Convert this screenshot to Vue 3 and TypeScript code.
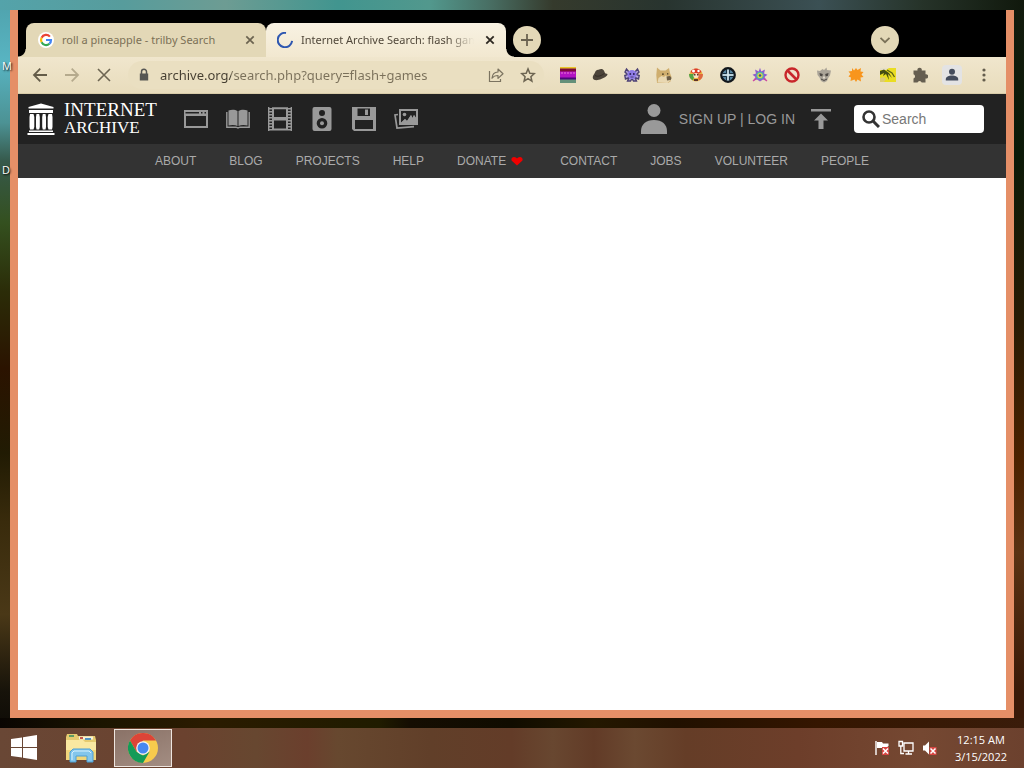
<script setup lang="ts">
import { ref } from 'vue'

interface NavItem {
  label: string
  heart?: boolean
}

const address = ref('archive.org/search.php?query=flash+games')
const query = ref('')

const navItems: NavItem[] = [
  { label: 'ABOUT' },
  { label: 'BLOG' },
  { label: 'PROJECTS' },
  { label: 'HELP' },
  { label: 'DONATE', heart: true },
  { label: 'CONTACT' },
  { label: 'JOBS' },
  { label: 'VOLUNTEER' },
  { label: 'PEOPLE' },
]
</script>

<template>
  <div class="desktop">
    <span class="desk-label first">M</span>
    <span class="desk-label second">D</span>

    <div class="stage">
      <section class="window">
        <div class="tab-strip">
          <div class="tab idle">
            <svg class="i16" viewBox="0 0 16 16">
              <circle cx="8" cy="8" r="8" fill="#fff" />
              <g fill="none" stroke-width="2.2">
                <path d="M11.9 4.6A5 5 0 0 0 3.6 5.7" stroke="#ea4335" />
                <path d="M3.6 5.7a5 5 0 0 0 0 4.6" stroke="#fbbc05" />
                <path d="M3.6 10.3a5 5 0 0 0 7.8 1.5" stroke="#34a853" />
                <path d="M11.4 11.8A5 5 0 0 0 13 8H8" stroke="#4285f4" />
              </g>
            </svg>
            <span class="tab-title">roll a pineapple - trilby Search</span>
            <button class="tab-close" aria-label="Close tab">
              <svg viewBox="0 0 16 16"><path d="M4.3 4.3l7.4 7.4m0-7.4l-7.4 7.4" fill="none" stroke="#6b6350" stroke-width="1.7" /></svg>
            </button>
          </div>
          <div class="tab active">
            <svg class="i16" viewBox="0 0 16 16"><path d="M9 .9A7.2 7.2 0 1 0 15.1 8.8" fill="none" stroke="#2d56b0" stroke-width="2" /></svg>
            <span class="tab-title fade">Internet Archive Search: flash games</span>
            <button class="tab-close" aria-label="Close tab">
              <svg viewBox="0 0 16 16"><path d="M4.3 4.3l7.4 7.4m0-7.4l-7.4 7.4" fill="none" stroke="#2c2720" stroke-width="1.8" /></svg>
            </button>
          </div>
          <button class="round" aria-label="New tab">
            <svg viewBox="0 0 28 28"><path d="M14 8v12M8 14h12" fill="none" stroke="#6a6250" stroke-width="1.8" /></svg>
          </button>
          <button class="round list" aria-label="Search tabs">
            <svg viewBox="0 0 28 28"><path d="M9.5 11.8l4.5 4.4 4.5-4.4" fill="none" stroke="#7a7158" stroke-width="1.8" /></svg>
          </button>
        </div>

        <div class="toolbar">
          <button class="tool" aria-label="Back">
            <svg viewBox="0 0 16 16"><path d="M15 8H2M8.3 1.7L2 8l6.3 6.3" fill="none" stroke="#645c49" stroke-width="1.8" /></svg>
          </button>
          <button class="tool" aria-label="Forward">
            <svg viewBox="0 0 16 16"><path d="M1 8h13M7.7 1.7L14 8l-6.3 6.3" fill="none" stroke="#b5aa8d" stroke-width="1.8" /></svg>
          </button>
          <button class="tool" aria-label="Stop loading">
            <svg viewBox="0 0 16 16"><path d="M2 2l12 12M14 2L2 14" fill="none" stroke="#6d6552" stroke-width="1.6" /></svg>
          </button>
          <form class="omnibox" @submit.prevent>
            <svg class="i16" viewBox="0 0 16 16"><path d="M3.8 6.5h8.4v7H3.8z" fill="#565653" /><path d="M5.5 7V4.8a2.5 2.5 0 0 1 5 0V7" fill="none" stroke="#565653" stroke-width="1.5" /></svg>
            <input v-model="address" class="address" type="text" aria-label="Address" />
            <button class="tool" type="button" aria-label="Share">
              <svg viewBox="0 0 16 16"><path d="M1.500 4v10.500h11V12" fill="none" stroke="#7b7360" stroke-width="1.2" /><path d="M4 11.200c.3-4 2.300-6 6-6.200V2l5 4.700-5 4.700V8.500C7.500 8.500 5.500 9.200 4 11.200z" fill="none" stroke="#7b7360" stroke-width="1.2" stroke-linejoin="round" /></svg>
            </button>
            <button class="tool" type="button" aria-label="Bookmark this page">
              <svg viewBox="0 0 16 16"><path d="M8 1.900l1.800 4.300 4.500.4-3.400 3.100 1 4.400L8 11.700l-3.900 2.400 1-4.400-3.400-3.100 4.500-.4z" fill="none" stroke="#6d6552" stroke-width="1.5" /></svg>
            </button>
          </form>

          <button class="tool" aria-label="Striped banner extension">
            <svg viewBox="0 0 16 16"><path fill="#e9c528" d="M0 0h16v3H0z" /><path fill="#7d0a3c" d="M0 1.500h16V5H0z" /><path fill="#b213c2" d="M0 4.500h16V12H0z" /><path d="M1 6h14" stroke="#ed79d6" stroke-dasharray="2 1" /><path fill="#4c0878" d="M0 10.500h16V13H0z" /><path fill="#65917a" d="M0 12.500h16V16H0z" /></svg>
          </button>
          <button class="tool" aria-label="Hat extension">
            <svg viewBox="0 0 16 16"><path d="M.8 11C.5 8.500 2.300 7.500 3 5.500 3.700 3.200 5 2.500 6.500 2.700 8 2.300 9 1.500 10.500 2.200c1.500.8 2 2.600 2.500 4L15.500 7c-.2 2.500-3.400 3.600-6.300 5C6 13.500 1.500 14 .8 11z" fill="#4c443a" /><path d="M3 8.500c3 1.800 7 0 9.500-2.300" fill="none" stroke="#332d26" /></svg>
          </button>
          <button class="tool" aria-label="Octopus extension">
            <svg viewBox="0 0 16 16"><path d="M5 5L2.500 2 1 5l2.500 2.500L.8 8.500 1.500 12 5 10.500 3.500 14h3L8 11.500 9.500 14h3L11 10.500l3.500 1.500.7-3.500-2.700-1L15 5l-1.500-3L11 5" fill="#b5a6dd" stroke="#4d4274" stroke-width="1.4" /><circle cx="8" cy="7.500" r="4.500" fill="#8e7be6" /><path d="M5.500 6h1.600v2H5.500zM9 6h1.600v2H9z" fill="#352a68" /><path d="M6.500 10h3" stroke="#4d4274" /></svg>
          </button>
          <button class="tool" aria-label="Dog extension">
            <svg viewBox="0 0 16 16"><path d="M1 .5L4.500 3.500h5L13 1l1 5 1.500 4-1 4.500L12 16H1L.3 8z" fill="#cfae6e" /><path d="M1.500 15.500L2.500 11l3-2 2.500 1 1.500-1.500 4.500 2 .5 3-3 2.500z" fill="#e9d8b2" /><path d="M10.500 9.500l3.500-.5 1.500 2-.8 2-3.700.5z" fill="#6b5c45" /><path d="M6 6.500h1.800v1.200H6zM11 6.300h1.300v1.200H11z" fill="#453822" /></svg>
          </button>
          <button class="tool" aria-label="Mushroom wheel extension">
            <svg viewBox="0 0 16 16"><circle cx="8" cy="8" r="6.500" fill="#e9b440" /><path d="M2.500 5a6 6 0 0 1 11 0L8 8z" fill="#dc3c2b" /><path d="M1 7h6l-2 6.500A7 7 0 0 1 1 7z" fill="#53a244" /><path d="M15 7H9l2 6.500A7 7 0 0 0 15 7z" fill="#df6940" /><circle cx="5.500" cy="4" r="1.500" fill="#fff" /><circle cx="10.500" cy="4" r="1.200" fill="#fff" /><circle cx="8" cy="8.500" r="2.600" fill="#f8e3c5" /><path d="M6 7h1.500v1.500H6zM9 7h1.500v1.500H9zM6 12h4v2H6z" fill="#60352a" /></svg>
          </button>
          <button class="tool" aria-label="Target extension">
            <svg viewBox="0 0 16 16"><circle cx="8" cy="8" r="6.700" fill="#55839e" stroke="#11161b" stroke-width="2.400" /><path d="M8 2.500v11M2.500 8h11" stroke="#dcebf0" stroke-width="1.500" /><path d="M6.500 3v3.500H3M9.500 3v3.500H13M6.500 13V9.500H3M9.500 13V9.500H13" fill="none" stroke="#19303f" /></svg>
          </button>
          <button class="tool" aria-label="Star burst extension">
            <svg viewBox="0 0 16 16"><path d="M8 .8l1.300 3.700L13 2.500l-1 4 3.500 1.200L12.500 10l2.500 4-4-1.500L8 14.500l-3-2L1 14l2.500-4L.5 7.700 4 6.500l-1-4 3.700 2z" fill="#8e5bcf" /><path d="M1 14l3-2.500m8 0l3 2.500" stroke="#d04a9e" stroke-width="1.300" /><circle cx="8" cy="8.500" r="3.800" fill="#4fb9a7" /><circle cx="8" cy="8.500" r="2.600" fill="#e2d944" /><circle cx="8" cy="8.500" r="1.300" fill="#3d4b98" /></svg>
          </button>
          <button class="tool" aria-label="Blocker extension">
            <svg viewBox="0 0 16 16"><circle cx="8" cy="8" r="6.500" fill="#f0dfc8" stroke="#c8262b" stroke-width="2.400" /><path d="M3.500 3.500l9 9" stroke="#c8262b" stroke-width="2.600" /></svg>
          </button>
          <button class="tool" aria-label="Skull extension">
            <svg viewBox="0 0 16 16"><path d="M1 3.500L4 4l2.500-2L8 3 10.500.5 11 3l4 .5-1 5-1.500 2L11 14l-3 1.500L5 14l-1.500-3.500L1.500 8z" fill="#aaa498" /><path d="M3.500 6l3.300 1-.5 2.500L4 8.800zM9.200 7l3.300-1-.5 2.800-2.300.7z" fill="#4b4743" /><path d="M5 12l3 1.500 3-1.500" fill="none" stroke="#4b4743" /><path d="M7.200 10.500h1.600" stroke="#eee7d8" stroke-width="2" /></svg>
          </button>
          <button class="tool" aria-label="Orange splat extension">
            <svg viewBox="0 0 16 16"><path d="M4 1l2 2.500L8 1l1.500 2L13 1l-.5 3.500 3 .5-2 2.500L15.500 10l-3 .5.5 4-3.500-2L8 15l-1.500-2.500L2.500 14l.5-3.500-2.500-1L2.500 7 .5 4.500l3.500-.5z" fill="#f8951d" /></svg>
          </button>
          <button class="tool" aria-label="Yellow jungle extension">
            <svg viewBox="0 0 16 16"><path fill="#eadd22" d="M0 1h16v14H0z" /><path d="M0 1h9L6 3H0z" fill="#e6dfc7" /><path d="M0 4l4-1.500L9 6l3 5-4-4 1 6-3-6-3 2 1-3-4 2z" fill="#454c12" /><path d="M7 3l5 3 2.500 4" fill="none" stroke="#5c6214" stroke-width="1.3" /><path d="M0 11l4-1 2 2-2 3H0z" fill="#dccb74" /></svg>
          </button>
          <button class="tool" aria-label="Extensions">
            <svg viewBox="0 0 16 16"><path d="M1.500 3.500h4a2.200 2.200 0 1 1 4.200 0h3.800v3.800a2.200 2.200 0 1 1 0 4.200v4H9.700a2.200 2.200 0 0 0-4.200 0h-4v-4a2.200 2.200 0 0 0 0-4.200z" fill="#655e50" /></svg>
          </button>
          <button class="tool profile" aria-label="Profile">
            <svg viewBox="0 0 16 16"><circle cx="8" cy="4.700" r="3" fill="#434b5c" /><path d="M1.800 13.500V12c0-2 3-3.500 6.200-3.500s6.200 1.500 6.200 3.500v1.500z" fill="#434b5c" /></svg>
          </button>
          <button class="tool" aria-label="Menu">
            <svg viewBox="0 0 16 16"><g fill="#645d4d"><circle cx="8" cy="3" r="1.600" /><circle cx="8" cy="8" r="1.600" /><circle cx="8" cy="13" r="1.600" /></g></svg>
          </button>
        </div>

        <header class="topbar">
          <a class="brand" href="#" aria-label="Internet Archive">
            <svg viewBox="0 0 28 32" fill="#fff"><path d="M14 .5L26.500 4v1.500h-25V4zM2 7h24v3H2zM2 27.500h24V29H2zM.5 30h27v2H.5z" /><path d="M3 11h3.500l.8 3v10l-.8 2.500H3L2.500 24V14zM9.500 11h2.700l.6 3v10l-.6 2.500H9.500L9 24V14zM15.800 11h2.700l.5 3v10l-.5 2.500h-2.700l-.6-2.500V14zM21.500 11H25l.5 3v10l-.5 2.500h-3.500l-.8-2.500V14z" /></svg>
            <span class="wordmark"><span class="word-top">INTERNET</span><span class="word-bottom">ARCHIVE</span></span>
          </a>
          <nav class="media" aria-label="Media">
            <a href="#" aria-label="Web"><svg viewBox="0 0 24 24"><path fill-rule="evenodd" d="M0 3h24v18H0zM2 9v10h20V9zM1.500 5v1.500H15V5zM17 5v1.500h1.500V5zM20.500 5v1.500H22V5z" /></svg></a>
            <a href="#" aria-label="Texts"><svg viewBox="0 0 24 24"><path d="M2.500 3.500c3-1 6.500-1 9 .5v15c-2.500-1.300-6-1.300-9-.5zM21.500 3.500c-3-1-6.500-1-9 .5v15c2.500-1.300 6-1.300 9-.5z" /><path d="M.8 5v15.200h9.200l2 .8 2-.8h9.200V5" fill="none" stroke="#999" stroke-width="1.400" /></svg></a>
            <a href="#" aria-label="Video"><svg viewBox="0 0 24 24"><path d="M5 1.200h14v9.800H5zM5 12.500h14v10H5z" fill="none" stroke="#999" stroke-width="2" /><path d="M.7 0v24M23.300 0v24" stroke="#999" stroke-width="1.400" /><path d="M2.500 1v23M21.500 1v23" stroke="#999" stroke-width="3" stroke-dasharray="1.500 1.500" /></svg></a>
            <a href="#" aria-label="Audio"><svg viewBox="0 0 24 24"><path fill-rule="evenodd" d="M4.500 0h15a2 2 0 0 1 2 2v20a2 2 0 0 1-2 2h-15a2 2 0 0 1-2-2V2a2 2 0 0 1 2-2zM12 3a3 3 0 1 0 0 6 3 3 0 1 0 0-6zM12 11a5.300 5.300 0 1 0 0 10.600A5.300 5.300 0 1 0 12 11z" /><circle cx="12" cy="16.300" r="2" /></svg></a>
            <a href="#" aria-label="Software"><svg viewBox="0 0 24 24"><path fill-rule="evenodd" d="M0 0h24v24H2l-2-2zM5.500 1.500V9H18V1.500zM3 13v9h18v-9z" /><path d="M13 2.500h3V8h-3z" /></svg></a>
            <a href="#" aria-label="Images"><svg viewBox="0 0 24 24"><path fill-rule="evenodd" d="M5 2h19v16H5zM7 4v12l4-4 2 2 4-6 1.500 3L20 8l2 3V4z" /><path d="M7 15.500l4-3.500 2 2 4-6 1.500 3L20 8l3 4v5H7z" /><circle cx="10.500" cy="7.500" r="1.800" /><path d="M4 7.500L1 8l2 13 17-1.300" fill="none" stroke="#999" stroke-width="1.700" /></svg></a>
          </nav>
          <div class="account">
            <svg class="person" viewBox="0 0 26 30" fill="#999"><circle cx="13" cy="6.500" r="6.500" /><path d="M0 30v-3c0-6.500 5-11 13-11s13 4.500 13 11v3z" /></svg>
            <span><a href="#">SIGN UP</a> | <a href="#">LOG IN</a></span>
          </div>
          <a class="upload" href="#" aria-label="Upload"><svg viewBox="0 0 20 20" fill="#999"><path d="M0 0h20v2.500H0zM10 4.500l7 7h-4.500V20h-5v-8.500H3z" /></svg></a>
          <form class="search" @submit.prevent>
            <svg viewBox="0 0 18 18" fill="none" stroke="#333"><circle cx="7" cy="7" r="5.500" stroke-width="2.600" /><path d="M11 11l6 6" stroke-width="3" /></svg>
            <input v-model="query" type="text" placeholder="Search" aria-label="Search" />
          </form>
        </header>

        <nav class="links" aria-label="Site">
          <a v-for="item in navItems" :key="item.label" href="#">
            {{ item.label }}
            <svg v-if="item.heart" viewBox="0 0 12 10"><path d="M6 9.500L.8 4.800C-.3 3 1 1 3 1c1.500 0 2.500.8 3 1.600C6.500 1.800 7.500 1 9 1c2 0 3.300 2 2.200 3.800z" fill="#f00000" /></svg>
          </a>
        </nav>
        <main class="page"></main>
      </section>
    </div>

    <footer class="taskbar">
      <button class="start" aria-label="Start">
        <svg viewBox="0 0 26 26" fill="#fff"><path d="M0 4l11-1.500V12H0zM12 2.300L26 0v12H12zM0 13h11v9.500L0 21zM12 13h14v12l-14-2.300z" /></svg>
      </button>
      <button class="task" aria-label="File Explorer">
        <svg viewBox="0 0 32 32">
          <path d="M1 5l1-3h10l1 2h17l1 4v19H1z" fill="#e6cb70" />
          <path d="M4 3h5v2H4z" fill="#5e9c64" /><path d="M14 4.500h14v3H14z" fill="#f8f2d8" /><path d="M15 5h3v2h-3z" fill="#c2574c" /><path d="M20 6h6v2h-6z" fill="#5295c2" />
          <path d="M1 8h17l2 2h11v18H1z" fill="#f9e8a1" /><path d="M1 18h30v10H1z" fill="#f0d67b" />
          <path d="M5 30V20l3-3h17l3 3v10h-6v-6H11v6z" fill="#83c6ec" stroke="#4d9fd3" /><path d="M7 28v-7l2-2h15l2 2" fill="none" stroke="#d7f2ff" />
        </svg>
      </button>
      <button class="task current" aria-label="Google Chrome">
        <svg viewBox="0 0 30 30">
          <circle cx="15" cy="15" r="15" fill="#f7cb4d" />
          <path d="M2 7.500A15 15 0 0 1 28 7.500H15L8.500 18.800z" fill="#dc4437" />
          <path d="M2 7.500l6.500 11.300L15 22.500l6.500-3.700L15 30A15 15 0 0 1 2 7.500z" fill="#139b58" />
          <circle cx="15" cy="15" r="6.800" fill="#f3f3f3" /><circle cx="15" cy="15" r="5.500" fill="#4688f1" />
        </svg>
      </button>
      <div class="tray">
        <button aria-label="Action Center"><svg viewBox="0 0 16 16"><path d="M2 1v14" stroke="#fff" stroke-width="1.400" /><path d="M3 2h5l1 1.500h5.500V6L12 8H3z" fill="#fff" /><path d="M8 7h7v8H8z" fill="#d64642" /><path d="M9 8.500l5 5m0-5l-5 5" stroke="#fff" stroke-width="1.500" /></svg></button>
        <button aria-label="Network"><svg viewBox="0 0 16 16" fill="none" stroke="#fff" stroke-width="1.300"><path d="M6 3h9v8H6zM10.500 11v3M7.500 14h6.500M1 1.500h3.500V6H1zM2.800 6v7.500H6" /></svg></button>
        <button aria-label="Volume"><svg viewBox="0 0 16 16"><path d="M1 5.500h2L7 1.500v13l-4-4H1z" fill="#fff" /><path d="M7.500 7h7v8h-7z" fill="#d64642" /><path d="M8.500 8.500l5 5m0-5l-5 5" stroke="#fff" stroke-width="1.500" /></svg></button>
      </div>
      <button class="clock"><span>12:15 AM</span><span>3/15/2022</span></button>
    </footer>
  </div>
</template>

<style>
html,
body {
  margin: 0;
}
</style>

<style scoped>
* {
  box-sizing: border-box;
}
.desktop {
  position: relative;
  display: flex;
  flex-direction: column;
  min-height: 100vh;
  font-family: "Open Sans", "Noto Sans", sans-serif;
  font-size: 12px;
  background:
    linear-gradient(90deg, #54a3aa, #579c9c 12%, #6d9c93 22%, #41958f 33%, #52988d 42%, #486d62 48%, #353a2c 54%, #28342f 65%, #3b5054 80%, #263329 90%, #10180c) top / 100% 10px no-repeat,
    linear-gradient(90deg, #090502, #1c1500 10%, #2b1b00 20%, #201c00 37%, #150d02 40%, #100c00 50%, #241800 58%, #211000 66%, #351600 80%, #3a1c0a) bottom 40px left 0 / 100% 10px no-repeat,
    linear-gradient(#4fa2ac, #58b4c2 8%, #4c9294 16%, #36594b 21%, #34501f 29%, #2b2c08 38%, #2b1300 48%, #211b03 59%, #392b0c 68%, #4a3817 80%, #17130a 90%, #050302) left / 10px 100% no-repeat,
    linear-gradient(#131c0e, #0c1a08 20%, #281b04 42%, #4d2200 60%, #5a3213 72%, #3a1a08 90%) right / 10px 100% no-repeat,
    #160e03;
}
.desk-label {
  position: absolute;
  left: 2px;
  color: #fff;
  font-size: 11px;
  line-height: 16px;
  text-shadow: 1px 1px 2px #000;
}
.first {
  top: 58px;
}
.second {
  top: 162px;
}
.stage {
  flex: 1;
  display: flex;
  padding: 10px;
}
.window {
  flex: 1;
  min-width: 0;
  display: flex;
  flex-direction: column;
  border: solid #e58f67;
  border-width: 0 8px 8px;
}
button {
  border: 0;
  padding: 0;
  background: none;
  font: inherit;
  color: inherit;
  display: flex;
  align-items: center;
  justify-content: center;
}
a {
  color: inherit;
  text-decoration: none;
}
svg {
  display: block;
  flex: none;
}
.i16 {
  width: 16px;
  height: 16px;
}
.tab-strip {
  display: flex;
  align-items: flex-end;
  height: 47px;
  padding-left: 8px;
  background: #000;
}
.tab {
  position: relative;
  flex: 0 1 240px;
  min-width: 0;
  display: flex;
  align-items: center;
  gap: 8px;
  height: 34px;
  padding: 0 8px 0 12px;
  border-radius: 8px 8px 0 0;
}
.idle {
  background: #e3d8b7;
  color: #7b7056;
}
.active {
  padding-left: 11px;
  background: linear-gradient(#f8f2e3, #f2e8d0);
  color: #51483a;
}
.idle::before,
.active::after {
  content: "";
  position: absolute;
  bottom: 0;
  width: 8px;
  height: 8px;
}
.idle::before {
  left: -8px;
  background: radial-gradient(circle at 0 0, #000 7px, #e3d8b7 8px);
}
.active::after {
  right: -8px;
  background: radial-gradient(circle at 100% 0, #000 7px, #f2e8d0 8px);
}
.tab-title {
  flex: 1;
  min-width: 0;
  overflow: hidden;
  white-space: nowrap;
  font-family: "Noto Sans", "Open Sans", sans-serif;
  font-size: 11px;
  line-height: 16px;
}
.fade {
  mask-image: linear-gradient(90deg, #000 85%, transparent);
}
.tab-close,
.tab-close svg {
  width: 16px;
  height: 16px;
}
.round {
  width: 28px;
  height: 28px;
  margin: 0 0 3px 7px;
  border-radius: 50%;
  background: #e3d8b7;
}
.round svg {
  width: 28px;
  height: 28px;
}
.list {
  margin-left: auto;
  margin-right: 107px;
}
.toolbar {
  display: flex;
  align-items: center;
  height: 37px;
  padding: 0 6px;
  background: linear-gradient(#f0e6cd, #e8dcbc);
  border-bottom: 1px solid #d8cba8;
}
.tool {
  flex: none;
  width: 32px;
  height: 32px;
}
.tool svg {
  width: 16px;
  height: 16px;
}
.profile svg {
  width: 20px;
  height: 20px;
  padding: 2px;
  background: #e3e3e4;
  border-radius: 4px;
}
.omnibox {
  flex: 1;
  min-width: 0;
  display: flex;
  align-items: center;
  height: 28px;
  margin: 0 8px;
  padding-left: 8px;
  border-radius: 14px;
  background: #eadfc1;
}
.address {
  flex: 1;
  min-width: 0;
  margin-left: 8px;
  padding: 0;
  border: 0;
  outline: 0;
  font-family: "Noto Sans", "Open Sans", sans-serif;
  font-size: 13px;
  line-height: 20px;
  color: transparent;
  background: linear-gradient(90deg, #453e31 71px, #7a705a 71px);
  background-clip: text;
}
.topbar {
  display: flex;
  align-items: center;
  height: 50px;
  padding: 0 22px 0 9px;
  background: #222;
  color: #999;
  font-family: "Liberation Sans", Arial, sans-serif;
  font-size: 14px;
}
.brand {
  display: flex;
  align-items: center;
  gap: 9px;
  color: #fff;
}
.brand svg {
  width: 28px;
  height: 32px;
}
.wordmark {
  display: flex;
  flex-direction: column;
  width: 96px;
  font-family: "Liberation Serif", "Times New Roman", serif;
  line-height: 18px;
}
.word-top {
  font-size: 19px;
}
.word-bottom {
  font-size: 17px;
}
.media {
  display: flex;
  gap: 18px;
  margin-left: 24px;
}
.media svg {
  width: 24px;
  height: 24px;
  fill: #999;
}
.account {
  display: flex;
  align-items: center;
  gap: 12px;
  margin-left: auto;
  white-space: nowrap;
}
.person {
  width: 26px;
  height: 30px;
}
.upload {
  margin: 0 23px 0 16px;
}
.upload svg {
  width: 20px;
  height: 20px;
}
.search {
  display: flex;
  align-items: center;
  gap: 2px;
  width: 130px;
  height: 28px;
  padding: 0 8px;
  border-radius: 4px;
  background: #fff;
}
.search svg {
  width: 18px;
  height: 18px;
}
.search input {
  flex: 1;
  min-width: 0;
  padding: 0;
  border: 0;
  outline: 0;
  background: none;
  font: inherit;
  color: #333;
}
.search input::placeholder {
  color: #777;
}
.links {
  display: flex;
  align-items: center;
  justify-content: center;
  gap: 33px;
  height: 34px;
  background: #333;
  color: #aaa;
  font-family: "Liberation Sans", Arial, sans-serif;
  font-size: 12px;
}
.links a {
  display: flex;
  align-items: center;
  gap: 5px;
}
.links svg {
  width: 12px;
  height: 10px;
  margin-right: 4px;
}
.page {
  flex: 1;
  background: #fff;
}
.taskbar {
  display: flex;
  align-items: center;
  height: 40px;
  padding-right: 17px;
  color: #fff;
  background: linear-gradient(90deg, #694735, #6b422f 18%, #674730 25%, #6b3f2d 30%, #67482f 33%, #613f29 42%, #633c28 50%, #684730 54%, #623b27 58%, #6b4931 62%, #653d27 67%, #6d3e2a 78%, #754832 90%, #6c412e);
}
.start {
  width: 48px;
  height: 40px;
}
.start svg {
  width: 26px;
  height: 26px;
}
.task {
  width: 58px;
  height: 38px;
  margin-left: 4px;
}
.task svg {
  width: 32px;
  height: 32px;
}
.current {
  border: 1px solid #eee5df;
  background: linear-gradient(160deg, #8a7267, #a38d82);
}
.current svg {
  width: 30px;
  height: 30px;
}
.tray {
  display: flex;
  gap: 8px;
  margin-left: auto;
}
.tray svg {
  width: 16px;
  height: 16px;
}
.clock {
  flex-direction: column;
  margin-left: 17px;
  font-family: "Open Sans", "Noto Sans", sans-serif;
  font-size: 11px;
  line-height: 17px;
}
</style>
